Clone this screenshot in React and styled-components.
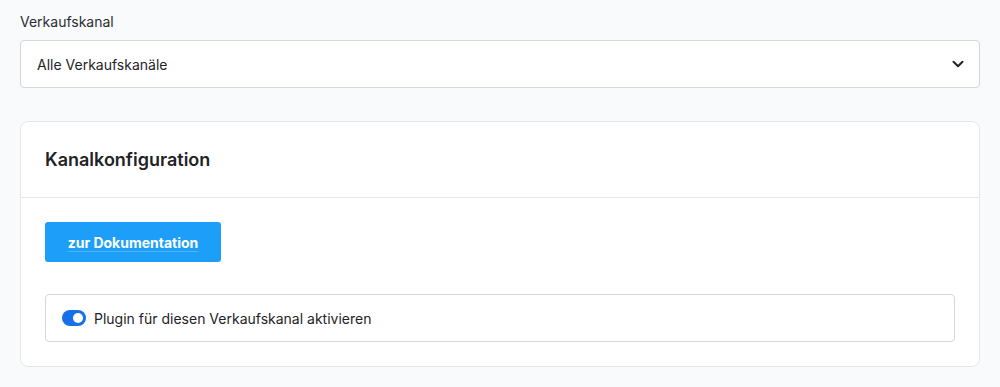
import React, { useState } from "react";
import styled, { createGlobalStyle } from "styled-components";

const GlobalStyle = createGlobalStyle`
  body {
    margin: 0;
    background: #f9fafb;
    font-family: Inter, "Noto Sans", sans-serif;
    color: #1f2328;
  }
`;

function App() {
  const [active, setActive] = useState(true);

  return (
    <Page>
      <GlobalStyle />
      <Field>
        <Label>Verkaufskanal</Label>
        <Select>
          <span>Alle Verkaufskanäle</span>
          <svg width="12" height="8" viewBox="0 0 12 8" fill="none">
            <path d="M1.5 1.8 6 6.2l4.5-4.4" stroke="#222" strokeWidth="2" strokeLinecap="round" strokeLinejoin="round" />
          </svg>
        </Select>
      </Field>

      <Card>
        <CardHeader>
          <Title>Kanalkonfiguration</Title>
        </CardHeader>
        <CardBody>
          <PrimaryButton>zur Dokumentation</PrimaryButton>
          <ToggleRow>
            <Toggle $on={active} onClick={() => setActive(!active)} />
            <ToggleLabel>Plugin für diesen Verkaufskanal aktivieren</ToggleLabel>
          </ToggleRow>
        </CardBody>
      </Card>
    </Page>
  );
}

const Page = styled.div`
  padding: 13px 20px 20px;
  display: flex;
  flex-direction: column;
  gap: 33px;
`;

const Field = styled.div`
  display: flex;
  flex-direction: column;
  gap: 9px;
`;

const Label = styled.label`
  font-size: 14px;
  line-height: 18px;
  color: #2a2e33;
`;

const Select = styled.div`
  height: 48px;
  box-sizing: border-box;
  background: #fff;
  border: 1px solid #d3d6da;
  border-radius: 4px;
  display: flex;
  align-items: center;
  justify-content: space-between;
  padding: 0 15px 0 16px;
  font-size: 14px;
  color: #1f2328;
`;

const Card = styled.section`
  background: #fff;
  border: 1px solid #e3e5e8;
  border-radius: 8px;
`;

const CardHeader = styled.div`
  height: 76px;
  box-sizing: border-box;
  display: flex;
  align-items: center;
  padding: 0 24px;
  border-bottom: 1px solid #e3e5e8;
`;

const Title = styled.h2`
  margin: 0;
  font-size: 18px;
  font-weight: 600;
  color: #1f2328;
`;

const CardBody = styled.div`
  padding: 24px 24px 24px;
  display: flex;
  flex-direction: column;
  align-items: flex-start;
  gap: 32px;
`;

const PrimaryButton = styled.button`
  height: 40px;
  width: 176px;
  border: none;
  border-radius: 3px;
  background: #1d9ff9;
  color: #fff;
  font-family: inherit;
  font-size: 14px;
  font-weight: 700;
  text-decoration: underline;
  text-decoration-color: rgba(255, 255, 255, 0.22);
  text-underline-offset: 3px;
  cursor: pointer;
`;

const ToggleRow = styled.div`
  align-self: stretch;
  height: 48px;
  box-sizing: border-box;
  border: 1px solid #d3d6da;
  border-radius: 4px;
  display: flex;
  align-items: center;
  gap: 8px;
  padding: 0 16px;
`;

const Toggle = styled.span`
  position: relative;
  width: 24px;
  height: 16px;
  border-radius: 8px;
  background: ${(p) => (p.$on ? "#1870e8" : "#c5c9ce")};
  flex-shrink: 0;
  cursor: pointer;
  &::after {
    content: "";
    position: absolute;
    top: 3px;
    left: ${(p) => (p.$on ? "11px" : "3px")};
    width: 10px;
    height: 10px;
    border-radius: 50%;
    background: #fff;
  }
`;

const ToggleLabel = styled.span`
  font-size: 14px;
  color: #1f2328;
`;

export default App;
